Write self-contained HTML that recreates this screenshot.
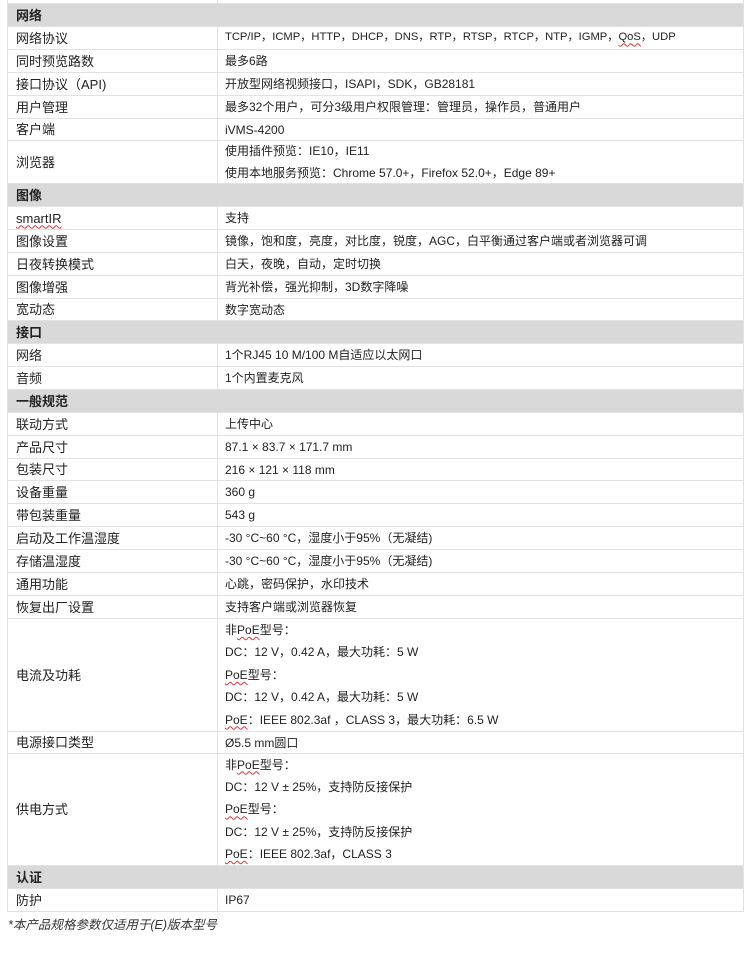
<!DOCTYPE html>
<html><head><meta charset="utf-8"><style>
body{margin:0;width:750px;height:963px;background:#fff;font-family:"Liberation Sans","Noto Sans CJK SC",sans-serif;color:#222;overflow:hidden;position:relative}
.t{position:absolute;left:7px;top:0;width:735px;border-left:1px solid #e2e2e2;border-right:1px solid #e2e2e2}
.r{display:flex;border-bottom:1px solid #e2e2e2;box-sizing:border-box}
.h{background:#d9d9d9;font-weight:bold;font-size:13px;padding-left:8px;display:flex;align-items:center;line-height:1}
.a{width:210px;border-right:1px solid #e2e2e2;padding-left:8px;display:flex;align-items:center;font-size:13px;box-sizing:border-box;flex:none;line-height:1}
.b{padding-left:7px;font-size:12px;display:flex;flex-direction:column;justify-content:center;line-height:1}
.b div{height:22.4px;line-height:22.4px}
.b .s{height:auto;line-height:1;font-size:11.2px}
.w{text-decoration:underline wavy #d33;text-decoration-thickness:1px;text-underline-offset:2px}
.f{position:absolute;left:8px;top:914px;font-size:12.5px;font-style:italic;color:#333}
</style></head><body>
<div class="t">
<div class="r" style="height:4px"><div class="a"></div><div class="b"></div></div>
<div class="r h" style="height:23px">网络</div>
<div class="r" style="height:23px"><div class="a">网络协议</div><div class="b"><div class="s">TCP/IP，ICMP，HTTP，DHCP，DNS，RTP，RTSP，RTCP，NTP，IGMP，<span class="w">QoS</span>，UDP</div></div></div>
<div class="r" style="height:23px"><div class="a">同时预览路数</div><div class="b">最多6路</div></div>
<div class="r" style="height:23px"><div class="a">接口协议（API)</div><div class="b">开放型网络视频接口，ISAPI，SDK，GB28181</div></div>
<div class="r" style="height:23px"><div class="a">用户管理</div><div class="b">最多32个用户，可分3级用户权限管理：管理员，操作员，普通用户</div></div>
<div class="r" style="height:22px"><div class="a">客户端</div><div class="b">iVMS-4200</div></div>
<div class="r" style="height:43px"><div class="a">浏览器</div><div class="b"><div>使用插件预览：IE10，IE11</div><div>使用本地服务预览：Chrome 57.0+，Firefox 52.0+，Edge 89+</div></div></div>
<div class="r h" style="height:23px">图像</div>
<div class="r" style="height:23px"><div class="a"><span class="w">smartIR</span></div><div class="b">支持</div></div>
<div class="r" style="height:23px"><div class="a">图像设置</div><div class="b">镜像，饱和度，亮度，对比度，锐度，AGC，白平衡通过客户端或者浏览器可调</div></div>
<div class="r" style="height:23px"><div class="a">日夜转换模式</div><div class="b">白天，夜晚，自动，定时切换</div></div>
<div class="r" style="height:23px"><div class="a">图像增强</div><div class="b">背光补偿，强光抑制，3D数字降噪</div></div>
<div class="r" style="height:22px"><div class="a">宽动态</div><div class="b">数字宽动态</div></div>
<div class="r h" style="height:23px">接口</div>
<div class="r" style="height:23px"><div class="a">网络</div><div class="b">1个RJ45 10 M/100 M自适应以太网口</div></div>
<div class="r" style="height:23px"><div class="a">音频</div><div class="b">1个内置麦克风</div></div>
<div class="r h" style="height:23px">一般规范</div>
<div class="r" style="height:23px"><div class="a">联动方式</div><div class="b">上传中心</div></div>
<div class="r" style="height:23px"><div class="a">产品尺寸</div><div class="b">87.1 × 83.7 × 171.7 mm</div></div>
<div class="r" style="height:22px"><div class="a">包装尺寸</div><div class="b">216 × 121 × 118 mm</div></div>
<div class="r" style="height:23px"><div class="a">设备重量</div><div class="b">360 g</div></div>
<div class="r" style="height:23px"><div class="a">带包装重量</div><div class="b">543 g</div></div>
<div class="r" style="height:23px"><div class="a">启动及工作温湿度</div><div class="b">-30 °C~60 °C，湿度小于95%（无凝结)</div></div>
<div class="r" style="height:23px"><div class="a">存储温湿度</div><div class="b">-30 °C~60 °C，湿度小于95%（无凝结)</div></div>
<div class="r" style="height:23px"><div class="a">通用功能</div><div class="b">心跳，密码保护，水印技术</div></div>
<div class="r" style="height:23px"><div class="a">恢复出厂设置</div><div class="b">支持客户端或浏览器恢复</div></div>
<div class="r" style="height:113px"><div class="a">电流及功耗</div><div class="b"><div>非<span class="w">PoE</span>型号：</div><div>DC：12 V，0.42 A，最大功耗：5 W</div><div><span class="w">PoE</span>型号：</div><div>DC：12 V，0.42 A，最大功耗：5 W</div><div><span class="w">PoE</span>：IEEE 802.3af ，CLASS 3，最大功耗：6.5 W</div></div></div>
<div class="r" style="height:22px"><div class="a">电源接口类型</div><div class="b">Ø5.5 mm圆口</div></div>
<div class="r" style="height:112px"><div class="a">供电方式</div><div class="b"><div>非<span class="w">PoE</span>型号：</div><div>DC：12 V ± 25%，支持防反接保护</div><div><span class="w">PoE</span>型号：</div><div>DC：12 V ± 25%，支持防反接保护</div><div><span class="w">PoE</span>：IEEE 802.3af，CLASS 3</div></div></div>
<div class="r h" style="height:23px">认证</div>
<div class="r" style="height:23px"><div class="a">防护</div><div class="b">IP67</div></div>
</div>
<div class="f">*本产品规格参数仅适用于(E)版本型号</div>
</body></html>
